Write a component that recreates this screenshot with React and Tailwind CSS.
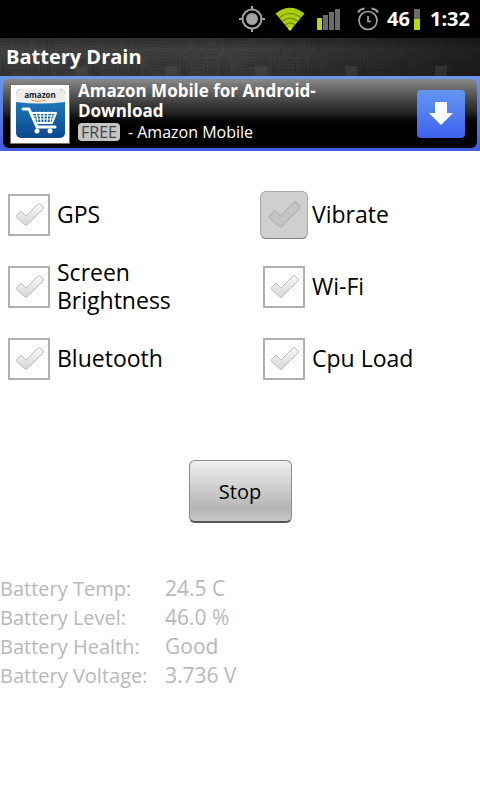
import React, { useState } from "react";

const TOGGLES = [
  { id: "gps", label: "GPS" },
  { id: "vibrate", label: "Vibrate", pressed: true },
  { id: "brightness", label: "Screen Brightness" },
  { id: "wifi", label: "Wi-Fi" },
  { id: "bluetooth", label: "Bluetooth" },
  { id: "cpu", label: "Cpu Load" },
];

const STATS = [
  { name: "Battery Temp:", value: "24.5 C" },
  { name: "Battery Level:", value: "46.0 %" },
  { name: "Battery Health:", value: "Good" },
  { name: "Battery Voltage:", value: "3.736 V" },
];

const GpsIcon = () => (
  <svg className="w-[26px] h-[26px]" viewBox="0 0 26 26" fill="none" stroke="#a3a3a3" strokeWidth="2">
    <circle cx="13" cy="13" r="9.5" />
    <circle cx="13" cy="13" r="6" fill="#a3a3a3" stroke="none" />
    <path d="M13 0v4M13 22v4M0 13h4M22 13h4" />
  </svg>
);

const WifiIcon = () => (
  <svg className="w-[30px] h-6" viewBox="0 0 30 24" fill="none">
    <path d="M0.5 6.5Q15 -5 29.5 6.5L15 24Z" fill="#a9cc10" />
    <path d="M4 11Q15 2 26 11M7 14.5Q15 8 23 14.5M10 18Q15 14 20 18" stroke="#6b8500" strokeWidth="1.1" />
    <circle cx="15" cy="21.5" r="1.8" fill="#c8ec1c" />
  </svg>
);

const SignalIcon = () => (
  <svg className="w-6 h-[21px]" viewBox="0 0 24 21">
    <rect x="0" y="9" width="5" height="12" fill="#b4d90c" />
    <rect x="6" y="6" width="5" height="15" fill="#6b6b6b" />
    <rect x="12" y="3" width="5" height="18" fill="#6b6b6b" />
    <rect x="18" y="0" width="5" height="21" fill="#6b6b6b" />
  </svg>
);

const AlarmIcon = () => (
  <svg className="w-[22px] h-6" viewBox="0 0 22 24" fill="none" stroke="#a3a3a3" strokeWidth="1.7">
    <circle cx="11" cy="13.5" r="9" />
    <path d="M11 9v5.500h3" />
    <path d="M1 5.5Q3 2 7.5 1.5M21 5.5Q19 2 14.5 1.5" strokeWidth="2" />
  </svg>
);

const CircuitTexture = () => (
  <svg className="absolute inset-0 w-full h-full" aria-hidden="true">
    <defs>
      <pattern id="circuit" width="120" height="38" patternUnits="userSpaceOnUse" patternTransform="scale(0.75 1)">
        <g fill="none" stroke="#111" strokeWidth="1" opacity="0.3">
          <path d="M0 4h12l5 5v9l4 4h10M0 7h10l4 4v9l5 5h12M0 10h8l3 3v9l6 6h14M0 13h5l3 3v9l7 7h16" />
          <path d="M0 17h3v18M3 20v18M6 24v14M9 28v10M12 31v7M21 0v14l4 4h8M24 0v13l3 3h8M27 0v11l3 3h6" />
          <path d="M31 2v8l6 6h14l4-4V2M34 2v7l4 4h11l3-3V2M37 2v5l2 3h8l2-2V2" />
          <path d="M60 0v14l-6 6v18M63 0v15l-6 6v17M66 0v16l-6 6v16M69 0v17l-6 6v15M72 0v18l-6 6v14" />
          <path d="M75 5h14l4 4h12l6-6h9M75 8h13l4 4h14l6-6h8M75 11h12l4 4h16l6-6h7M75 14h11l4 4h18l6-6h6" />
          <path d="M75 17h10l4 4h20l6-6h5M75 20h9l4 4h22l6-6h4M75 23h8l4 4h24l6-6h3M75 2h16l4 4h9l6-6" />
          <path d="M72 34l8-8h16l4-4h20M75 36l7-7h16l4-4h18M78 38l6-6h16l4-4h16M36 22h12v12H34v-9" />
          <circle cx="42" cy="28" r="3" />
        </g>
        <rect x="100" y="28" width="16" height="10" fill="#666" opacity="0.3" />
      </pattern>
    </defs>
    <rect width="100%" height="100%" fill="url(#circuit)" />
  </svg>
);

const AmazonLogo = () => (
  <svg className="w-[60px] h-[60px] shrink-0" viewBox="0 0 60 60">
    <defs>
      <linearGradient id="logoBlue" x1="0" y1="0" x2="0" y2="1">
        <stop offset="0" stopColor="#2487c8" />
        <stop offset="1" stopColor="#0c4a8d" />
      </linearGradient>
    </defs>
    <rect x="0.5" y="0.5" width="59" height="59" fill="#fff" stroke="#7c7468" />
    <rect x="6" y="5" width="49" height="49" rx="5" fill="url(#logoBlue)" />
    <path d="M6 18V11Q6 5 12 5H49Q55 5 55 11V18Q30 21 6 18Z" fill="#ededed" />
    <text x="30" y="14" textAnchor="middle" fontFamily="Open Sans, sans-serif" fontWeight="700" fontSize="8" fill="#222">
      amazon
    </text>
    <path d="M21 16Q28 19 35 16" fill="none" stroke="#f59a23" strokeWidth="1" />
    <g fill="none" stroke="#fff" strokeLinecap="round" strokeLinejoin="round">
      <path d="M13 25h6l8 18h18" strokeWidth="3" />
      <path d="M20 29h26l-4 10H26" strokeWidth="2" />
      <path d="M22 32h23M23 35h21M26 28l2 10M30 28l1 10M34 28v10M38 28l-1 10M42 28l-2 10" strokeWidth="1.2" />
    </g>
    <circle cx="27" cy="47" r="2.5" fill="#fff" />
    <circle cx="40" cy="47" r="2.5" fill="#fff" />
  </svg>
);

const CheckMark = ({ id, pressed, checked }) => (
  <svg
    className={
      pressed
        ? "col-start-1 row-start-1 w-[34px] h-[30px] ml-0.5 pointer-events-none"
        : "col-start-1 row-start-1 w-[30px] h-[26px] ml-0.5 pointer-events-none"
    }
    viewBox="0 0 30 26"
  >
    <defs>
      <linearGradient id={`tick-${id}`} x1="0" y1="0" x2="0" y2="1">
        <stop offset="0" stopColor="#f6f6f6" />
        <stop offset="1" stopColor="#d8d8d8" />
      </linearGradient>
    </defs>
    <path
      d="M1.5 13.5L5 10Q6 9 7 10L11 14L23 2Q24 1 25 2L28 5Q29 6 28 7L12 23Q11 24 10 23L1.5 15.5Q1 14.5 1.5 13.5Z"
      fill={checked ? "#8bc220" : pressed ? "#c5c5c5" : `url(#tick-${id})`}
      stroke={pressed ? "#b8b8b8" : "#bdbdbd"}
      strokeWidth={pressed ? "1.5" : "1"}
    />
  </svg>
);

const Toggle = ({ item, checked, onChange }) => (
  <label className="flex items-center gap-1 h-[72px] pl-[5px] text-[23px] leading-7 text-black">
    <span className="grid place-items-center w-12 h-12 shrink-0">
      <input
        type="checkbox"
        name={item.id}
        checked={checked}
        onChange={onChange}
        className={
          item.pressed
            ? "col-start-1 row-start-1 appearance-none w-12 h-12 rounded-md border border-[#aaa] border-b-[#808080] bg-[#cfcfcf]"
            : "col-start-1 row-start-1 appearance-none w-[42px] h-[42px] border-2 border-[#b0b0b0] bg-white"
        }
      />
      <CheckMark id={item.id} pressed={item.pressed} checked={checked} />
    </span>
    <span className="max-w-40 pb-0.5">{item.label}</span>
  </label>
);

const App = () => {
  const [active, setActive] = useState({});

  const handleToggle = (e) => {
    setActive({ ...active, [e.target.name]: e.target.checked });
  };

  return (
    <div className="min-h-screen bg-white font-['Open_Sans','Noto_Sans',sans-serif]">
      {/* Status bar */}
      <div className="flex items-center justify-end h-[38px] pr-[10px] bg-black text-white text-xl font-bold">
        <GpsIcon />
        <span className="ml-[10px]"><WifiIcon /></span>
        <span className="ml-3"><SignalIcon /></span>
        <span className="ml-4"><AlarmIcon /></span>
        <span className="ml-2">46</span>
        <span className="flex flex-col w-1.5 h-[21px] ml-1">
          <span className="h-[10px] bg-[#6b6b6b]" />
          <span className="flex-1 bg-[#b4d90c]" />
        </span>
        <span className="ml-[10px]">1:32</span>
      </div>

      {/* Title bar */}
      <header className="relative h-[38px] bg-linear-to-r from-[#444] via-[#424242] to-[#202020]">
        <CircuitTexture />
        <div className="absolute inset-0 bg-linear-to-b from-black/30 via-transparent via-30% to-black/20" />
        <h1 className="relative pl-1.5 text-xl leading-[38px] font-bold text-white">Battery Drain</h1>
      </header>

      {/* Ad banner */}
      <section className="p-[3px] bg-linear-to-b from-[#6c98ea] to-[#425bdf]">
        <div className="flex items-center h-[69px] pl-[7px] pr-3 rounded-md bg-linear-to-b from-[#8a8a8a] via-[#202020] via-50% to-black to-70% text-white">
          <AmazonLogo />
          <div className="flex-1 pl-2 pb-[5px]">
            <p className="max-w-64 text-[17px] leading-5 font-bold">Amazon Mobile for Android-Download</p>
            <p className="flex items-center gap-2 mt-px text-base leading-5">
              <span className="px-[3px] rounded-sm bg-[#c4c4c4] leading-[18px] text-[#444]">FREE</span>
              <span>- Amazon Mobile</span>
            </p>
          </div>
          <button
            type="button"
            aria-label="Download"
            className="grid place-items-center w-12 h-12 rounded-sm bg-linear-to-b from-[#6496f0] to-[#4060ee]"
          >
            <svg className="w-6 h-6" viewBox="0 0 24 24" fill="#fff">
              <path d="M6 0h12v11h6L12 23L0 11h6Z" />
            </svg>
          </button>
        </div>
      </section>

      <main className="pt-7">
        <div className="grid grid-cols-[17fr_15fr]">
          {TOGGLES.map((item) => (
            <Toggle key={item.id} item={item} checked={!!active[item.id]} onChange={handleToggle} />
          ))}
        </div>

        <div className="flex justify-center mt-[65px]">
          <button
            type="button"
            className="w-[103px] h-[63px] pt-0.5 rounded-md border border-[#8c8c8c] border-b-2 border-b-[#555] bg-linear-to-b from-[#f0f0f0] via-[#b5b5b5] via-80% to-[#c8c8c8] text-xl text-black"
          >
            Stop
          </button>
        </div>

        <dl className="grid grid-cols-[165px_1fr] mt-[51px] leading-[29px] text-[#b8b8b8]">
          {STATS.map((stat) => (
            <React.Fragment key={stat.name}>
              <dt className="text-xl leading-[29px]">{stat.name}</dt>
              <dd className="text-[21px] leading-[29px]">{stat.value}</dd>
            </React.Fragment>
          ))}
        </dl>
      </main>
    </div>
  );
};

export default App;
